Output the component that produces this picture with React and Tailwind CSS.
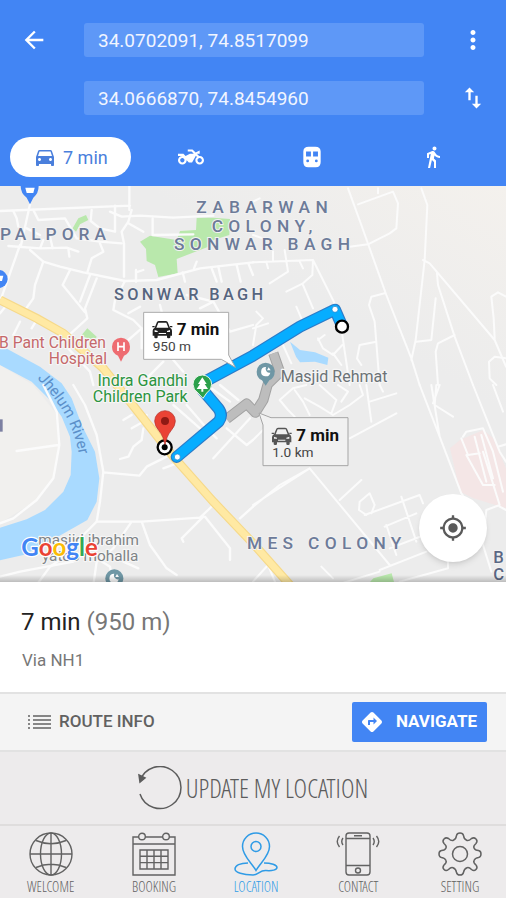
import { useState } from "react";
import {
  MdArrowBack,
  MdMoreVert,
  MdImportExport,
  MdDirectionsCar,
  MdDirectionsWalk,
  MdMyLocation,
  MdDirections,
  MdTwoWheeler,
} from "react-icons/md";

const roadsNorthWest = [
  "M0 78L390 62M388 0V75M330 80L365 95L420 92L520 98L640 92",
  "M40 78L50 100L55 125M60 180L0 350M90 58L62 185M100 75L115 105L195 100L230 160M230 160L300 170L365 175",
  "M345 62V140M275 75L272 108L300 130L345 140M395 75L385 110L365 140L372 175L372 275M385 115L430 140M458 100V150L580 148",
  "M25 183L120 190L200 188L235 200M80 130L120 150M150 155L158 190M205 190L208 215M120 190L130 165",
  "M90 195L130 230L180 245L250 262L375 288L470 285L600 250L759 232",
  "M130 230L105 300L100 340L75 375M210 255L188 300L255 382M270 270L240 350M290 280L255 370L262 400L180 475M300 175L310 200L275 220L262 262",
  "M375 288L345 345L340 375L400 405L425 430L385 465M408 255V290M430 255L408 262M548 262L555 290M590 230L582 250M635 250L650 290M655 245L665 290M710 240L722 290M745 235L759 270",
  "M425 430V490M640 350L690 440L759 420M0 385L20 360M40 450L60 410M95 430L110 405M195 480L270 560L280 600M480 360L490 400M420 365L385 385M520 525L550 560M430 590L490 530M600 370L640 350L560 330",
];
const roadsNorthEast = [
  "M285 10L325 120L400 330L475 520L500 600M505 10L523 60L515 225L488 465L475 525",
  "M315 58L420 20L435 55L430 130L410 145L345 178L290 185M375 10V25",
  "M510 225L530 235L725 465L759 545M552 265L555 300L605 455L660 600M548 340L535 465L490 470M605 450L555 475L548 500L555 600",
  "M759 335L735 322L715 335L722 400L725 460M395 325L355 335L348 360L365 410L380 600M370 470L320 480L312 520L325 540M759 520L725 515L708 530L710 580L730 600",
  "M0 232L180 225L245 355M60 195V225M95 195L105 260L50 295M40 230L45 250M140 230L150 250M180 225L178 270L150 295L100 320M150 300L180 370M130 365L145 400",
  "M265 430L290 600M195 460L210 490L240 510L268 480M90 480L115 535M215 450L195 465M0 430L45 415M10 380L30 400L10 420L0 480M240 505L265 540",
  "M0 50L20 40M0 150L30 160",
];
const roadsSouthWest = [
  "M220 0L255 60L290 150L310 260L300 350L290 410L250 450L215 500L150 545L110 600M310 262L418 272L440 245L500 215",
  "M290 410L425 410L600 398L640 360M425 410L450 480L500 550L530 570M610 395L545 460L550 470M615 395L690 490L690 525M395 410L340 490L290 530L280 600",
  "M130 0L170 80L178 180L160 280L110 345L40 400L0 415M50 198L175 180",
  "M430 130L425 165L400 185L385 215L360 222M370 105L395 90M395 130L430 110L440 90M640 220L750 100M680 130L740 180L759 165M520 60L600 130M490 250L530 235",
  "M0 575L60 560L220 530M290 520L330 545L340 600M720 400L759 365M370 530L415 550M620 0L690 50M660 0L715 45M560 60L620 130L650 160",
];
const roadsSouthEast = [
  "M0 165L35 130M0 365L80 300L170 250L410 540M170 250L0 360M290 160L430 85M260 345L325 285M335 390L500 330L510 355M395 425L490 385M410 490L515 450M445 335L490 470M400 420L430 510",
  "M355 385L365 360L350 325L320 350L318 375L340 390M380 560L250 600M380 555L520 500M585 530V550L440 590M205 545L240 580M500 0L560 155L625 325L640 345M550 0L545 60L600 95M535 0L560 155M560 0L540 55",
  "M660 0L700 100L740 200L759 230M720 0L750 80M690 200L740 360L700 375L690 480L715 560M630 155L640 140L690 130L720 200L750 320M640 210L690 300L725 300M625 160L645 210L680 205M665 155L700 290M685 150L720 280M735 185L759 178M740 365L759 375",
  "M80 45L120 10L160 0M80 45L105 75L125 95M125 15L150 50L170 90M155 40L200 65L240 90L290 60L330 30L320 0M200 0L250 45L235 85M255 0L285 20L265 50M340 0L355 110M350 50L430 25M380 0L390 20",
  "M0 590L45 540L70 600",
];

const blocks = [
  { shift: "translate(0 0)", width: 7, roads: roadsNorthWest },
  { shift: "translate(759 0)", width: 6, roads: roadsNorthEast },
  { shift: "translate(0 600)", width: 7, roads: roadsSouthWest },
  { shift: "translate(759 600)", width: 6, roads: roadsSouthEast },
];

const highway = "M0 345L110 400L190 445L310 550L390 650L520 815L640 950L759 1075L870 1200";
const mainRoute =
  "M1025 420L1005 374L900 425L759 512L622 586L608 615L655 670Q670 690 656 710L530 816";
const otherRoute = "M820 505L840 562L803 598L790 645L766 683L740 656L680 702";

function CalloutCar({ x, y, color }) {
  return (
    <g transform={`translate(${x} ${y})`} fill={color}>
      <path
        fillRule="evenodd"
        d="M14 3Q16 0 20 0H40Q44 0 46 3L53 20Q59 23 59 29V44H54V49Q54 52 50 52H48Q44 52 44 49V44H16V49Q16 52 12 52H10Q6 52 6 49V44H1V29Q1 23 7 20ZM18 5L12 20H48L42 5ZM7 27V33H16V30ZM53 27L44 30V33H53ZM19 36V39H41V36Z"
      />
      <path d="M0 15H7V19H0ZM53 15H60V19H53Z" />
    </g>
  );
}

function RouteMap() {
  return (
    <svg
      viewBox="0 3 1518 1188"
      className="block h-auto w-full font-[Roboto,sans-serif]"
      role="img"
      aria-label="Route map"
    >
      <defs>
        <linearGradient id="terrain" x1="0.6" y1="0.5" x2="1" y2="0">
          <stop offset="0.3" stopColor="#ececec" />
          <stop offset="1" stopColor="#f4f1ed" />
        </linearGradient>
        <linearGradient id="edge" x1="0" y1="0" x2="0" y2="1">
          <stop offset="0" stopColor="#000" stopOpacity="0" />
          <stop offset="1" stopColor="#000" stopOpacity="0.2" />
        </linearGradient>
        <path id="river-label" d="M112 580C165 640 225 705 242 840" />
      </defs>
      <rect y="3" width="1518" height="1188" fill="url(#terrain)" />
      <path d="M0 540L100 600L165 680L178 780L160 880L110 945L0 1015Z" fill="#f1f0ee" />

      {/* parks and hospital grounds */}
      <g fill="#b9e8ac">
        <path d="M420 170L450 152L530 165L540 138L588 135L590 98H640L690 102L688 150L640 165L625 185L555 212L530 222L533 265L475 276L465 240L440 228L438 192Z" />
        <path d="M218 130L235 100L258 90L265 105L240 118L228 140Z" />
        <path d="M245 450L262 430L290 455L280 475Z" />
        <path d="M1120 1180L1175 1165L1182 1191H1110Z" />
      </g>
      <path d="M1350 790L1380 765L1450 735L1480 760L1518 850V970L1420 940L1380 920Z" fill="#f4e6e6" />

      {/* water */}
      <path
        d="M0 480L120 545L185 595L215 640L245 720L285 800L298 880L290 950L262 1005L200 1040L130 1080L70 1110L0 1126V1028L80 1003L135 975L190 920L212 870L215 800L210 755L185 695L150 645L95 590L0 540Z"
        fill="#a9daff"
      />
      <path d="M870 470L900 495L945 502L985 518L982 540L945 530L900 532L888 515Z" fill="#a9daff" />

      <g fill="none" stroke="#fbfbfb" strokeLinejoin="round" strokeLinecap="round">
        {blocks.map(({ shift, width, roads }) => (
          <g key={shift} transform={shift} strokeWidth={width}>
            {roads.map((d) => (
              <path key={d} d={d} />
            ))}
          </g>
        ))}
      </g>

      <path d={highway} fill="none" stroke="#f6d98a" strokeWidth="27" />
      <path d={highway} fill="none" stroke="#ffe9a3" strokeWidth="20" />

      {/* district names */}
      <g fill="#6d7b99" fontWeight="500" stroke="#f2f2f2" strokeWidth="6" paintOrder="stroke">
        <text x="0" y="164" fontSize="52" letterSpacing="15">PALPORA</text>
        <g fontSize="52" letterSpacing="16" textAnchor="middle">
          <text x="794" y="85">ZABARWAN</text>
          <text x="794" y="140">COLONY,</text>
          <text x="794" y="195">SONWAR BAGH</text>
        </g>
        <text x="342" y="346" fontSize="49" letterSpacing="10" fill="#56657f">SONWAR BAGH</text>
        <text x="741" y="1093" fontSize="52" letterSpacing="16">MES COLONY</text>
        <text x="1480" y="1133" fontSize="50" fill="#5a6784">B</text>
        <text x="1480" y="1184" fontSize="50" fill="#5a6784">C</text>
      </g>
      <text fontSize="46" fill="#5b8fc9">
        <textPath href="#river-label">Jhelum River</textPath>
      </text>
      <rect x="0" y="703" width="8" height="37" fill="#7c80a2" />

      <g stroke="#f6f6f6" strokeWidth="7" paintOrder="stroke" strokeLinejoin="round">
        <g fill="#c5696b" fontSize="47" textAnchor="end">
          <text x="318" y="489">B Pant Children</text>
          <text x="321" y="537">Hospital</text>
        </g>
        <g fill="#2c9440" fontSize="48" textAnchor="end">
          <text x="563" y="602">Indra Gandhi</text>
          <text x="563" y="650">Children Park</text>
        </g>
        <g fontSize="46" fill="#7e8386" textAnchor="end">
          <text x="417" y="1080">masjid ibrahim</text>
          <text x="415" y="1129">yatoo mohalla</text>
        </g>
      </g>

      {/* alternative route */}
      <g fill="none" strokeLinejoin="round">
        <path d={otherRoute} stroke="#a2a2a2" strokeWidth="31" />
        <path d={otherRoute} stroke="#bdbdbd" strokeWidth="25" />
      </g>
      <text
        x="842"
        y="591"
        fontSize="48"
        fill="#6c7377"
        stroke="#f6f6f6"
        strokeWidth="7"
        paintOrder="stroke"
        strokeLinejoin="round"
      >
        Masjid Rehmat
      </text>

      {/* main route */}
      <g fill="none" strokeLinejoin="round" strokeLinecap="round">
        <path d={mainRoute} stroke="#2c7bc8" strokeWidth="36" />
        <path d={mainRoute} stroke="#06adff" strokeWidth="29" />
      </g>
      <circle cx="1005" cy="373" r="9" fill="#fff" stroke="#1c7fc8" strokeWidth="2" />
      <circle cx="532" cy="816" r="9" fill="#fff" stroke="#1c7fc8" strokeWidth="2" />
      <circle cx="1026" cy="425" r="18" fill="#fff" stroke="#000" strokeWidth="7" />

      {/* place pins */}
      <g>
        <path d="M90 58L80 38Q62 25 62 3H116Q116 25 100 38Z" fill="#4285f4" />
        <path d="M76 8H104L100 24H80Z" fill="#fff" />
        <circle cx="-4" cy="282" r="27" fill="#4285f4" />
        <path d="M0 272H10L6 288H0Z" fill="#fff" />
        <path d="M363 530L354 512Q336 505 336 485A27 27 0 0 1 390 485Q390 505 372 512Z" fill="#ee6c71" />
        <path d="M354 472V498M372 472V498M354 485H372" stroke="#fff" strokeWidth="5" />
        <path d="M609 640L594 624Q579 614 579 598A28 28 0 0 1 635 598Q635 614 620 624Z" fill="#2ba04a" stroke="#e9f5ea" strokeWidth="3" />
        <path d="M607 577L594 597H600L590 612H604V620H610V612H624L614 597H620Z" fill="#fff" />
        <path d="M797 602L786 586Q770 578 770 560A27 27 0 0 1 824 560Q824 578 808 586Z" fill="#6f97a5" />
        <path d="M798 546A14 14 0 1 0 811 563A12 12 0 0 1 798 546ZM806 547L812 556H801Z" fill="#fff" />
        <circle cx="343" cy="1180" r="27" fill="#6f97a5" />
        <path d="M343 1166A14 14 0 1 0 356 1183A12 12 0 0 1 343 1166ZM351 1167L357 1176H346Z" fill="#fff" />
      </g>

      {/* destination marker */}
      <circle cx="494" cy="787" r="21" fill="#fff" stroke="#000" strokeWidth="7" />
      <path d="M495 784Q492 755 476 736Q464 722 464 708A31 31 0 0 1 526 708Q526 722 514 736Q498 755 495 784Z" fill="#ea4335" stroke="#b3312a" strokeWidth="2" />
      <circle cx="495" cy="708" r="12" fill="#8f1a14" />
      <circle cx="494" cy="787" r="9" fill="#000" />

      {/* travel time callouts */}
      <g strokeWidth="3">
        <path d="M431 382H686V510L706 547L664 523H431Z" fill="#fff" stroke="#aaa" />
        <path d="M789 720L777 684L813 698H1044V842H789Z" fill="#f1f1f1" stroke="#a5a5a5" />
      </g>
      <CalloutCar x={457} y={408} color="#222" />
      <CalloutCar x={815} y={728} color="#555" />
      <g fill="#111">
        <text x="530" y="449" fontSize="51" fontWeight="700">7 min</text>
        <text x="458" y="497" fontSize="41" fill="#444">950 m</text>
        <text x="889" y="768" fontSize="51" fontWeight="700">7 min</text>
        <text x="817" y="815" fontSize="41" fill="#444">1.0 km</text>
      </g>

      <text
        x="64"
        y="1114"
        fontSize="72"
        fontWeight="700"
        stroke="#fff"
        strokeWidth="7"
        paintOrder="stroke"
        strokeLinejoin="round"
        className="font-[Lato,sans-serif]"
      >
        <tspan fill="#4285f4">G</tspan>
        <tspan fill="#ea4335">o</tspan>
        <tspan fill="#fbbc05">o</tspan>
        <tspan fill="#4285f4">g</tspan>
        <tspan fill="#34a853">l</tspan>
        <tspan fill="#ea4335">e</tspan>
      </text>
      <rect y="1170" width="1518" height="21" fill="url(#edge)" />
    </svg>
  );
}

function TransitIcon({ size }) {
  return (
    <svg width={size} height={size} viewBox="0 0 24 24" fill="currentColor" aria-hidden="true">
      <path
        fillRule="evenodd"
        d="M9 2.5H15Q20 2.5 20 7V16.5Q20 21.5 15.5 21.5H8.5Q4 21.5 4 16.5V7Q4 2.5 9 2.5ZM6.5 7V11.5H11V7ZM13 7V11.5H17.5V7ZM8 14.3A1.3 1.3 0 1 0 8 16.9A1.3 1.3 0 1 0 8 14.3ZM16 14.3A1.3 1.3 0 1 0 16 16.9A1.3 1.3 0 1 0 16 14.3Z"
      />
    </svg>
  );
}

function GlobeIcon() {
  return (
    <svg className="size-11" viewBox="0 0 44 44" fill="none" stroke="currentColor" strokeWidth="1.4" aria-hidden="true">
      <circle cx="22" cy="22" r="21" />
      <ellipse cx="22" cy="22" rx="10.5" ry="21" />
      <path d="M22 1V43M1 22H43M7 8.5Q22 15 37 8.5M7 35.5Q22 29 37 35.5" />
    </svg>
  );
}

function CalendarIcon() {
  return (
    <svg className="size-11" viewBox="0 0 44 44" fill="none" stroke="currentColor" strokeWidth="1.4" aria-hidden="true">
      <path d="M7 5H1V43H43V5H37M13 5H31M1 12H43" />
      <circle cx="10" cy="4.5" r="3.3" />
      <circle cx="34" cy="4.5" r="3.3" />
      <path d="M8 18H36V37H8ZM15 18V37M22 18V37M29 18V37M8 24.3H36M8 30.6H36" />
    </svg>
  );
}

function PinIcon() {
  return (
    <svg className="size-11" viewBox="0 0 44 44" fill="none" stroke="currentColor" strokeWidth="1.5" aria-hidden="true">
      <path d="M22 38.5C18 31 8.5 24 8.5 14.5A13.5 13.5 0 0 1 35.5 14.5C35.5 24 26 31 22 38.5Z" />
      <circle cx="22" cy="14.5" r="5" />
      <path d="M14 31C6 31 1 33.5 1 37C1 40.5 9 43 19 43C24 43 26 38 32 38.5C38 39 43 38 43 35.5C43 33 37 31 30 31" />
    </svg>
  );
}

function PhoneIcon() {
  return (
    <svg className="size-11" viewBox="0 0 44 44" fill="none" stroke="currentColor" strokeWidth="1.4" aria-hidden="true">
      <rect x="10" y="1" width="24" height="42" rx="3" />
      <path d="M10 6.5H34M10 33.5H34M18 3.8H26" />
      <circle cx="22" cy="38.5" r="2.5" />
      <path d="M7 6Q4.5 9.5 7 13M3.5 4Q-1 9.5 3.5 15M37 6Q39.5 9.5 37 13M40.5 4Q45 9.5 40.5 15" />
    </svg>
  );
}

function GearIcon() {
  return (
    <svg className="size-11" viewBox="0 0 44 44" fill="none" stroke="currentColor" strokeWidth="1.5" strokeLinejoin="round" aria-hidden="true">
      <path d="M18.5 3.5Q19 1 22 1Q25 1 25.5 3.5Q26 7.5 29 8.5Q31 9 33.5 6.5Q36 5 38 7Q40 9 38 11.5Q35 14 36 16Q37 18.5 40.5 18.5Q43 19 43 22Q43 25 40.5 25.5Q37 26 36 28.5Q35 30.5 38 33Q40 35.5 38 37.5Q36 39.5 33.5 37.5Q31 35 29 35.8Q26 37 25.5 40.5Q25 43 22 43Q19 43 18.5 40.5Q18 37 15 35.8Q13 35 10.5 37.5Q8 39.5 6 37.5Q4 35.5 6 33Q9 30.5 8 28.5Q7 26 3.5 25.5Q1 25 1 22Q1 19 3.5 18.5Q7 18.5 8 16Q9 14 6 11.5Q4 9 6 7Q8 5 10.5 6.5Q13 9 15 8.5Q18 7.5 18.5 3.5Z" />
      <circle cx="22" cy="22" r="7.5" />
    </svg>
  );
}

const modes = [
  { id: "Drive", Icon: MdDirectionsCar, size: 24, time: "7 min" },
  { id: "Motorcycle", Icon: MdTwoWheeler, size: 26 },
  { id: "Transit", Icon: TransitIcon, size: 26 },
  { id: "Walk", Icon: MdDirectionsWalk, size: 24 },
];

const tabs = [
  { label: "WELCOME", Icon: GlobeIcon },
  { label: "BOOKING", Icon: CalendarIcon },
  { label: "LOCATION", Icon: PinIcon },
  { label: "CONTACT", Icon: PhoneIcon },
  { label: "SETTING", Icon: GearIcon },
];

const fieldClass =
  "h-[34px] w-full min-w-0 rounded-[3px] bg-[#5e98f7] px-[14px] text-[19px] text-[#f1f5ff] outline-none";

export default function App() {
  const [start, setStart] = useState("34.0702091, 74.8517099");
  const [end, setEnd] = useState("34.0666870, 74.8454960");

  return (
    <div className="bg-white font-[Roboto,sans-serif]">
      <header className="bg-[#4285f4] pt-[23px] pb-[9px] text-white">
        <div className="grid grid-cols-[84px_1fr_82px] items-center gap-y-6">
          <button type="button" aria-label="Back" className="flex justify-center pr-4">
            <MdArrowBack size={28} />
          </button>
          <input aria-label="Start" className={fieldClass} value={start} onChange={(e) => setStart(e.target.value)} />
          <button type="button" aria-label="More options" className="flex justify-center pl-4">
            <MdMoreVert size={30} />
          </button>
          <input
            aria-label="Destination"
            className={`${fieldClass} col-start-2`}
            value={end}
            onChange={(e) => setEnd(e.target.value)}
          />
          <button type="button" aria-label="Swap start and destination" className="flex justify-center pl-4">
            <MdImportExport size={28} />
          </button>
        </div>
        <div className="mt-[22px] grid grid-cols-4 pr-[13px] pl-[10px]">
          {modes.map(({ id, Icon, size, time }) => (
            <button
              key={id}
              type="button"
              aria-label={time ? undefined : id}
              className={
                time
                  ? "flex h-10 items-center justify-center gap-[6px] rounded-full bg-white text-[18px] text-[#4a7fdc]"
                  : "flex h-10 items-center justify-center"
              }
            >
              <Icon size={size} />
              {time}
            </button>
          ))}
        </div>
      </header>

      <section className="relative">
        <RouteMap />
        <button
          type="button"
          aria-label="My location"
          className="absolute right-[19px] bottom-5 flex size-[68px] items-center justify-center rounded-full bg-white text-[#5a5a5a] shadow-md"
        >
          <MdMyLocation size={28} />
        </button>
      </section>

      <section className="px-[21px] pt-6 pb-5">
        <h1 className="text-[24px] leading-8 text-[#222]">
          7 min <span className="text-[#777]">(950 m)</span>
        </h1>
        <p className="mt-[10px] pl-px text-[17px] leading-6 text-[#777]">Via NH1</p>
      </section>

      <div className="flex items-center justify-between border-y-2 border-[#e2e2e2] bg-[#f4f4f4] py-2 pr-[19px] pl-7">
        <button type="button" className="flex items-center gap-2 text-[17px] font-medium text-[#616161]">
          <svg className="h-4 w-[23px]" viewBox="0 0 23 16" fill="none" stroke="currentColor" strokeWidth="1.6" aria-hidden="true">
            <path d="M0 2H2M5 2H23M0 6H2M5 6H23M0 10H2M5 10H23M0 14H2M5 14H23" />
          </svg>
          ROUTE INFO
        </button>
        <button
          type="button"
          className="flex h-10 items-center gap-3 rounded-[2px] bg-[#4285f4] pr-[10px] pl-2 text-[17px] font-bold text-white"
        >
          <MdDirections size={24} />
          NAVIGATE
        </button>
      </div>

      <button
        type="button"
        className="flex h-[72px] w-full items-center justify-center gap-1 bg-[#edebec] font-['Open_Sans_Condensed_Light','Roboto_Condensed','Liberation_Sans_Narrow',sans-serif] text-[26px] font-light text-[#5c5c5c]"
      >
        <svg className="size-11" viewBox="0 0 44 44" fill="none" stroke="currentColor" strokeWidth="1.5" aria-hidden="true">
          <path d="M2 15A21 21 0 1 1 2 28" />
          <path d="M1 9L7 12L2 16Z" fill="currentColor" />
        </svg>
        UPDATE MY LOCATION
      </button>

      <nav className="flex justify-between border-t-2 border-[#dfdddd] bg-[#edebec] pt-[6px] pr-6 pb-px pl-[27px]">
        {tabs.map(({ label, Icon }) => (
          <button
            key={label}
            type="button"
            className={
              label === "LOCATION"
                ? "flex flex-col items-center gap-px text-[#2f9be6]"
                : "flex flex-col items-center gap-px text-[#626262]"
            }
          >
            <Icon />
            <span className="font-['Open_Sans_Condensed_Light','Roboto_Condensed','Liberation_Sans_Narrow',sans-serif] text-[14px] leading-5 font-light">
              {label}
            </span>
          </button>
        ))}
      </nav>
    </div>
  );
}
